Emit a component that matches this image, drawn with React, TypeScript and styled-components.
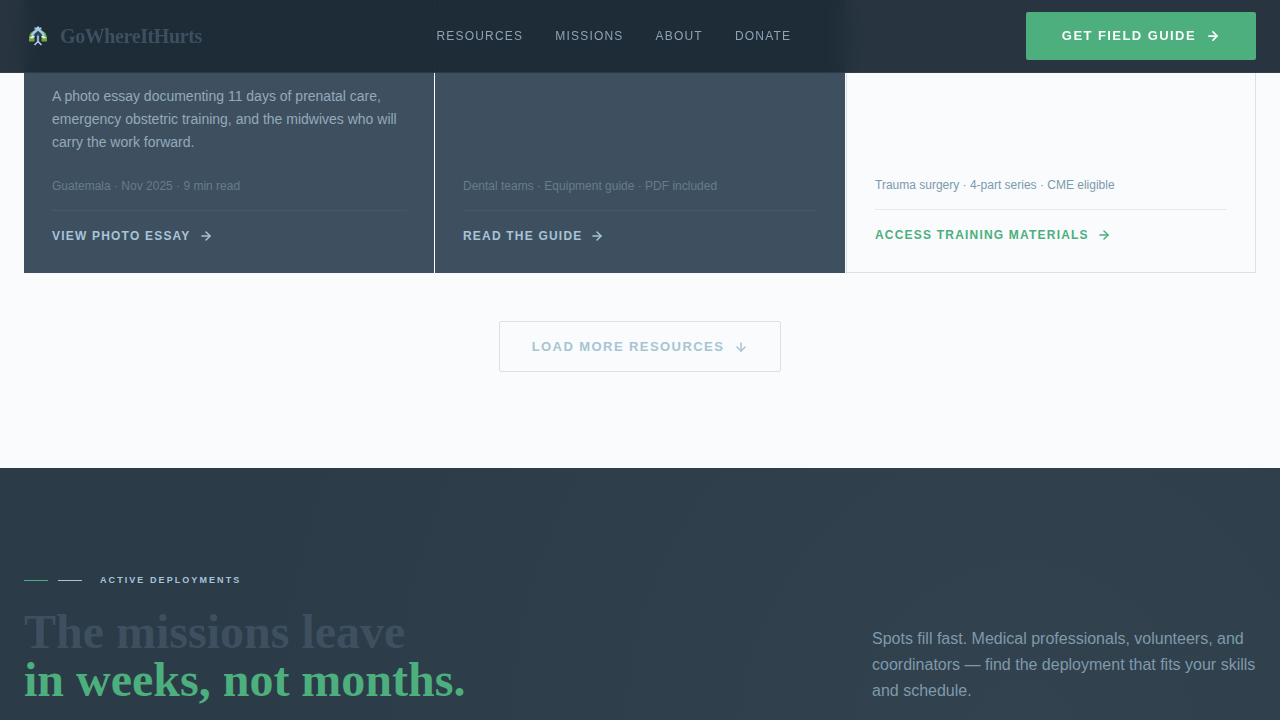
import React from "react";
import styled, { createGlobalStyle } from "styled-components";
import { ArrowDown, ArrowRight } from "lucide-react";

const sans = `"Liberation Sans", Arial, sans-serif`;
const serif = `"Liberation Serif", "Times New Roman", serif`;

const GlobalStyle = createGlobalStyle`
  *, *::before, *::after { box-sizing: border-box; }
  body { margin: 0; background: #f9fbfc; font-family: ${sans}; color: #8fa9bb; }
  h2, p { margin: 0; }
  a { color: inherit; text-decoration: none; }
  button { font-family: inherit; cursor: pointer; }
`;

const Header = styled.header`
  position: fixed;
  inset: 0 0 auto;
  z-index: 10;
  display: flex;
  align-items: center;
  justify-content: space-between;
  padding: 12px 24px;
  background: rgba(28, 42, 54, 0.95);
  border-bottom: 1px solid rgba(62, 80, 96, 0.4);
  backdrop-filter: blur(12px);
`;

const Brand = styled.a`
  display: flex;
  align-items: center;
  gap: 8px;
  font: 700 20px/28px ${serif};
  letter-spacing: -0.02em;
  color: #3e5060;
`;

const Nav = styled.nav`
  display: flex;
  gap: 32px;
  font-size: 12px;
  line-height: 18px;
  letter-spacing: 0.1em;
  text-transform: uppercase;
  color: #8fa3b3;
`;

const GuideButton = styled.button`
  display: flex;
  align-items: center;
  gap: 10px;
  padding: 16px 36px;
  border: 0;
  border-radius: 2px;
  background: #4caf7d;
  color: #f9fbfc;
  font-size: 13px;
  line-height: 16px;
  font-weight: 700;
  letter-spacing: 0.11em;
  text-transform: uppercase;
`;

const Resources = styled.section`
  padding: 0 24px 96px;
  display: flex;
  flex-direction: column;
  align-items: center;
  gap: 48px;
`;

const CardGrid = styled.div`
  width: 100%;
  display: grid;
  grid-template-columns: repeat(3, 1fr);
  gap: 1px;
`;

const Card = styled.article<{ $light?: boolean }>`
  display: flex;
  flex-direction: column;
  justify-content: flex-end;
  padding: 85px 28px 28px;
  background: ${(p) => (p.$light ? "#f9fbfc" : "#3e5060")};
  border: ${(p) => (p.$light ? "1px solid #d9e0e6" : "0")};
  --meta: ${(p) => (p.$light ? "#7a9aad" : "#647d8b")};
  --rule: ${(p) => (p.$light ? "#e6eaee" : "#475967")};
  --link: ${(p) => (p.$light ? "#4caf7d" : "#a8c4d8")};
`;

const Description = styled.p`
  font-size: 14px;
  line-height: 23px;
  margin-bottom: 23px;
  color: #93aabc;
`;

const Meta = styled.p`
  font-size: 12px;
  line-height: 18px;
  margin-bottom: 15px;
  color: var(--meta);
`;

const CardFooter = styled.div`
  display: flex;
  padding-top: 16px;
  border-top: 1px solid var(--rule);
`;

const CardLink = styled.a`
  display: flex;
  align-items: center;
  gap: 8px;
  font-size: 12px;
  line-height: 18px;
  font-weight: 700;
  letter-spacing: 0.1em;
  text-transform: uppercase;
  color: var(--link);
`;

const LoadMore = styled.button`
  display: flex;
  align-items: center;
  gap: 10px;
  padding: 16px 32px;
  border: 1px solid #d9e0e6;
  border-radius: 2px;
  background: transparent;
  color: #a8c4d4;
  font-size: 13px;
  line-height: 17px;
  font-weight: 700;
  letter-spacing: 0.11em;
  text-transform: uppercase;
`;

const Deployments = styled.section`
  padding: 104px 24px 96px;
  background: radial-gradient(circle at 80% 80%, #32424f 0%, #2b3b47 800px);
`;

const Eyebrow = styled.div`
  display: flex;
  align-items: center;
  gap: 10px;
  margin-bottom: 20px;
  font-size: 9px;
  line-height: 16px;
  font-weight: 700;
  letter-spacing: 0.23em;
  text-transform: uppercase;
  color: #a8c4d8;
`;

const Dash = styled.span<{ $color: string }>`
  width: 24px;
  height: 1px;
  background: ${(p) => p.$color};
`;

const EyebrowText = styled.span`
  padding-left: 8px;
`;

const SectionHead = styled.div`
  display: flex;
  align-items: flex-end;
  justify-content: space-between;
  gap: 48px;
`;

const Title = styled.h2`
  font: 700 48px/48px ${serif};
  color: #3e5060;
`;

const Accent = styled.span`
  display: block;
  color: #4caf7d;
`;

const Intro = styled.p`
  max-width: 384px;
  font-size: 16px;
  line-height: 26px;
  color: #7f9aab;
`;

const Logo = () => (
  <svg width="28" height="28" viewBox="0 0 28 28" aria-hidden="true">
    <path d="M10 8.500L6.500 11 5 15v4.500h5.500V13zM18 8.500l3.500 2.500 1.500 4v4.500h-5.500V13z" fill="#6fa544" />
    <path d="M5.500 16l3.500-3 2 1.500-2.500 2zM22.500 16L19 13l-2 1.500 2.500 2z" fill="#e3f0e4" />
    <path d="M14 8l4.500 4v2H16v6h-4v-6H9.500v-2z" fill="#24465f" />
    <path d="M8 13.500l2-3L14 7l4 3.500 2 3" fill="none" stroke="#a9c8e2" strokeWidth="2.500" />
    <path d="M10.500 6.500h7M14 4.500V8" stroke="#a9c8e2" strokeWidth="2" />
    <path d="M14 13.500V20M10.500 23l3.500-3.500 3.500 3.500" fill="none" stroke="#b9cfe2" strokeWidth="1.500" />
  </svg>
);

const links = ["Resources", "Missions", "About", "Donate"];

const cards = [
  {
    description:
      "A photo essay documenting 11 days of prenatal care, emergency obstetric training, and the midwives who will carry the work forward.",
    meta: "Guatemala · Nov 2025 · 9 min read",
    link: "View photo essay",
  },
  { meta: "Dental teams · Equipment guide · PDF included", link: "Read the guide" },
  { meta: "Trauma surgery · 4-part series · CME eligible", link: "Access training materials", light: true },
];

export default function App() {
  return (
    <>
      <GlobalStyle />
      <Header>
        <Brand href="#">
          <Logo />
          GoWhereItHurts
        </Brand>
        <Nav>
          {links.map((label) => (
            <a key={label} href={`#${label.toLowerCase()}`}>{label}</a>
          ))}
        </Nav>
        <GuideButton type="button">
          Get field guide
          <ArrowRight size={14} strokeWidth={3} aria-hidden />
        </GuideButton>
      </Header>
      <main>
        <Resources id="resources">
          <CardGrid>
            {cards.map((card) => (
              <Card key={card.link} $light={card.light}>
                {card.description && <Description>{card.description}</Description>}
                <Meta>{card.meta}</Meta>
                <CardFooter>
                  <CardLink href="#">
                    {card.link}
                    <ArrowRight size={14} strokeWidth={2.5} aria-hidden />
                  </CardLink>
                </CardFooter>
              </Card>
            ))}
          </CardGrid>
          <LoadMore type="button">
            Load more resources
            <ArrowDown size={14} strokeWidth={2.5} aria-hidden />
          </LoadMore>
        </Resources>
        <Deployments id="missions">
          <Eyebrow>
            <Dash $color="#4caf7d" />
            <Dash $color="#a8c4d8" />
            <EyebrowText>Active deployments</EyebrowText>
          </Eyebrow>
          <SectionHead>
            <Title>
              The missions leave
              <Accent>in weeks, not months.</Accent>
            </Title>
            <Intro>
              Spots fill fast. Medical professionals, volunteers, and coordinators — find the deployment that fits your skills and schedule.
            </Intro>
          </SectionHead>
        </Deployments>
      </main>
    </>
  );
}
